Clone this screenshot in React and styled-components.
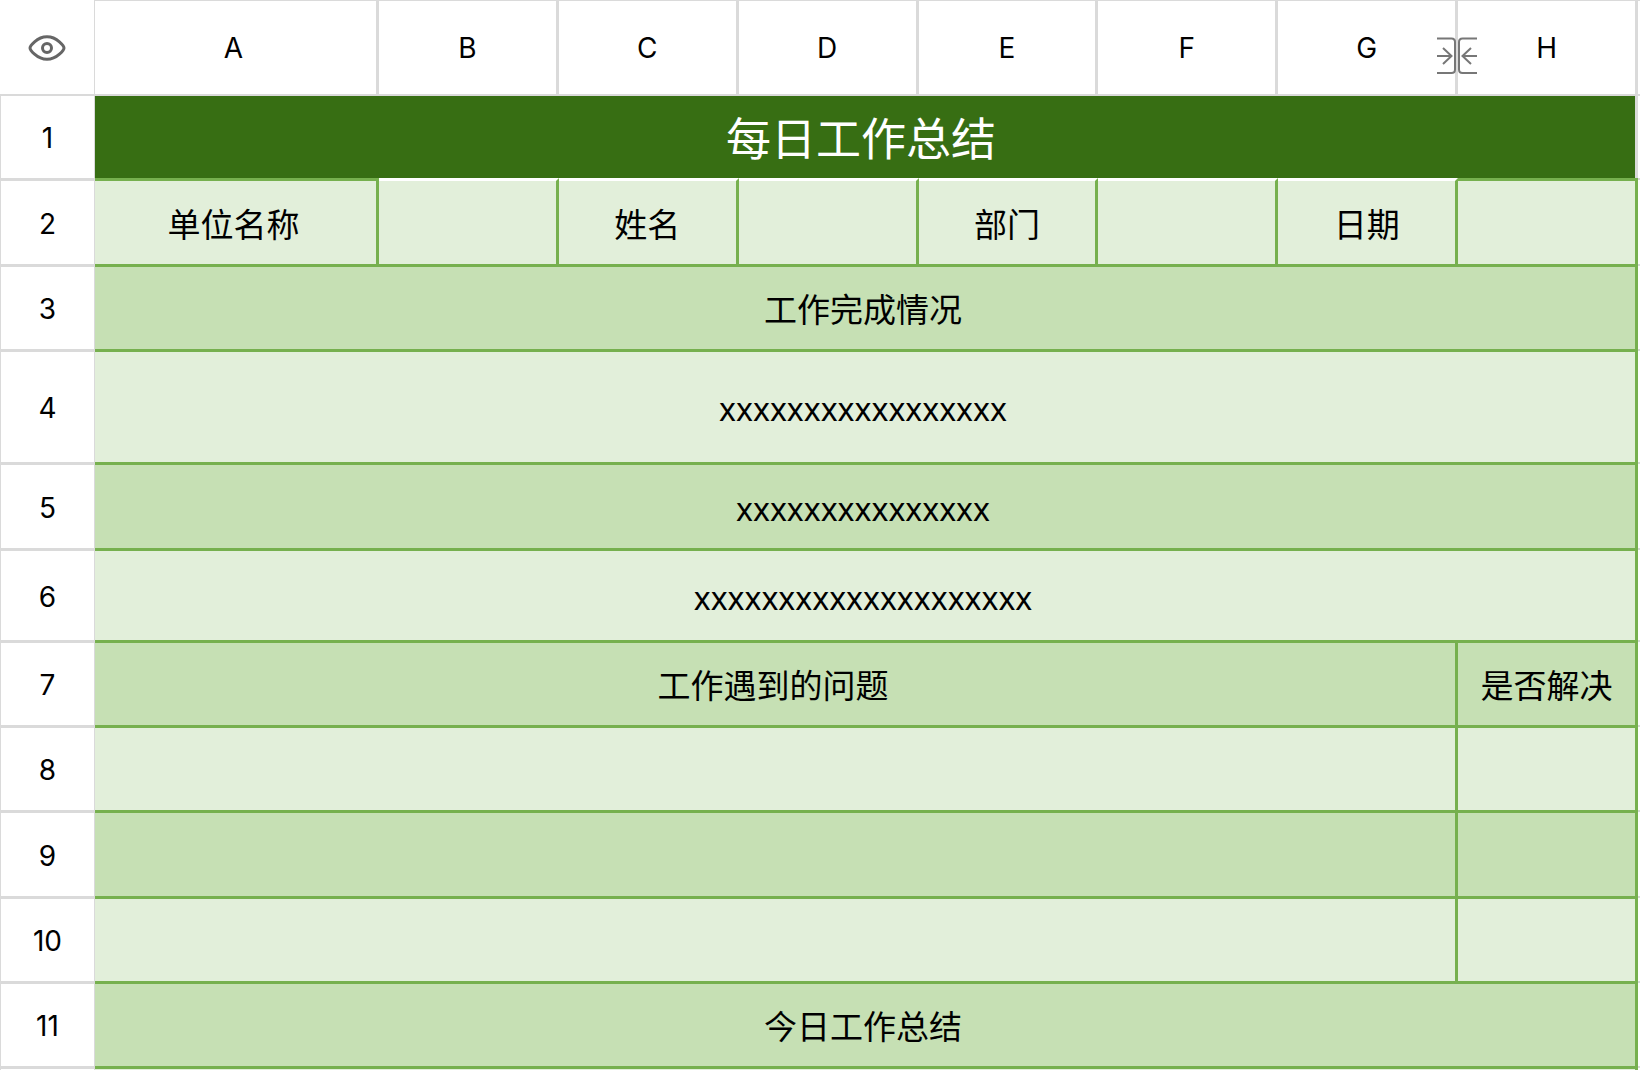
import React from 'react';
import styled, { createGlobalStyle } from 'styled-components';

const LINE = '#dadada';
const GREEN = '#76b04e';
const LIGHT = '#e2efda';
const MID = '#c6e0b4';
const DARK = '#376e13';

const GlobalStyle = createGlobalStyle`
  body {
    margin: 0;
    background: #fff;
    color: #000;
  }
`;

const Sheet = styled.table`
  width: 100%;
  table-layout: fixed;
  border-collapse: separate;
  border-spacing: 0;
  font-family: 'Noto Sans', 'Noto Sans CJK SC', sans-serif;
`;

const Col = styled.col`
  width: ${({ $width }) => ($width ? `${$width}px` : 'auto')};
`;

const Row = styled.tr`
  height: ${({ $height }) => $height}px;
`;

const Corner = styled.td`
  box-sizing: border-box;
  padding: 2px 0 0;
  border-right: 1px solid ${LINE};
`;

const EyeButton = styled.button`
  display: flex;
  margin: 0 auto;
  padding: 0;
  border: 0;
  background: none;
  cursor: pointer;
`;

const ColumnHead = styled.th`
  position: relative; // anchors the resize handle
  box-sizing: border-box;
  padding: 0 ${({ $wide }) => ($wide ? 4 : 0)}px 0 0;
  border-top: 1px solid ${LINE};
  border-right: 3px solid ${LINE};
  font-family: Inter, sans-serif;
  font-size: 28px;
  font-weight: 400;
  line-height: 32px;
`;

const RowHead = styled.th`
  box-sizing: border-box;
  padding: 2px 0 0;
  border-top: ${({ $first }) => ($first ? 2 : 3)}px solid ${LINE};
  border-left: 1px solid ${LINE};
  border-right: 1px solid ${LINE};
  font-family: Inter, sans-serif;
  font-size: 28px;
  font-weight: 400;
  line-height: 32px;
`;

const Cell = styled.td`
  box-sizing: border-box;
  // columns wider than the standard one sit slightly left of centre
  padding: 4px ${({ $wide }) => ($wide ? 4 : 0)}px 0 0;
  border-top: 3px solid ${({ $top }) => $top || GREEN};
  border-right: 3px solid ${GREEN};
  background: ${({ $fill }) => $fill};
  font-size: ${({ $note }) => ($note ? 32 : 33)}px;
  line-height: 40px;
  text-align: center;
  white-space: nowrap;
`;

const TitleCell = styled(Cell)`
  padding: 4px 8px 0 0;
  border-top: 2px solid ${LINE};
  border-right-color: ${LINE};
  color: #fff;
  font-size: 45px;
  line-height: 56px;
`;

const EdgeRow = styled(Row)`
  & > * {
    padding: 0;
  }
`;

const Gutter = styled.td`
  padding: 0;
  border-top: ${({ $head }) => ($head ? 1 : 2)}px solid ${LINE};
`;

const ResizeHandle = styled.button`
  position: absolute; // sits over the line between two columns
  top: 35px;
  right: -22px;
  z-index: 1;
  display: flex;
  padding: 0;
  border: 0;
  background: none;
  cursor: col-resize;
`;

const EyeIcon = () => (
  <svg width="38" height="26" viewBox="0 0 38 26" fill="none" stroke="#666" strokeWidth="3">
    <path
      d="M2 13C2 11.500 8.500 1.700 19 1.700S36 11.500 36 13S29.500 24.300 19 24.300S2 14.500 2 13Z"
      strokeLinejoin="round"
    />
    <circle cx="19" cy="13" r="4.500" />
  </svg>
);

const ResizeIcon = () => (
  <svg width="40" height="38" viewBox="0 0 40 38" fill="none" stroke="#777" strokeWidth="2">
    <path d="M0 2.500H14.500Q18 2.500 18 6V33.500Q18 37 14.500 37H0" />
    <path d="M40 2.500H25.500Q22 2.500 22 6V33.500Q22 37 25.500 37H40" />
    <path d="M0 20H15M6 12L14.500 20L6 28" />
    <path d="M40 20H25M34 12L25.500 20L34 28" />
  </svg>
);

const columns = ['A', 'B', 'C', 'D', 'E', 'F', 'G', 'H'];

const rows = [
  { height: 84, title: '每日工作总结' },
  {
    height: 86,
    cells: [
      { text: '单位名称', wide: true },
      { top: '#fff' },
      { text: '姓名', top: '#fff' },
      { top: '#fff' },
      { text: '部门', top: '#fff' },
      { top: '#fff' },
      { text: '日期', top: '#fff' },
      {},
    ],
  },
  { height: 85, cells: [{ text: '工作完成情况', span: 8, fill: MID }] },
  { height: 113, cells: [{ text: 'xxxxxxxxxxxxxxxxx', span: 8, note: true }] },
  { height: 86, cells: [{ text: 'xxxxxxxxxxxxxxx', span: 8, fill: MID, note: true }] },
  { height: 92, cells: [{ text: 'xxxxxxxxxxxxxxxxxxxx', span: 8, note: true }] },
  { height: 85, cells: [{ text: '工作遇到的问题', span: 7, fill: MID }, { text: '是否解决', fill: MID }] },
  { height: 85, cells: [{ span: 7 }, {}] },
  { height: 86, cells: [{ span: 7, fill: MID }, { fill: MID }] },
  { height: 85, cells: [{ span: 7 }, {}] },
  { height: 85, cells: [{ text: '今日工作总结', span: 8, fill: MID }] },
];

const App = () => {
  return (
    <>
      <GlobalStyle />
      <Sheet>
        <colgroup>
          <Col $width={95} />
          <Col $width={284} />
          {columns.slice(1).map((name) => (
            <Col key={name} />
          ))}
          <Col $width={2} />
        </colgroup>
        <thead>
          <Row $height={94}>
            <Corner>
              <EyeButton type="button" aria-label="显示">
                <EyeIcon />
              </EyeButton>
            </Corner>
            {columns.map((name) => (
              <ColumnHead key={name} scope="col" $wide={name === 'A'}>
                {name}
                {name === 'G' && (
                  <ResizeHandle type="button" aria-label="调整列宽">
                    <ResizeIcon />
                  </ResizeHandle>
                )}
              </ColumnHead>
            ))}
            <Gutter $head />
          </Row>
        </thead>
        <tbody>
          {rows.map((row, i) => (
            <Row key={i} $height={row.height}>
              <RowHead scope="row" $first={i === 0}>
                {i + 1}
              </RowHead>
              {row.title && (
                <TitleCell colSpan={8} $fill={DARK}>
                  {row.title}
                </TitleCell>
              )}
              {row.cells?.map((cell, j) => (
                <Cell
                  key={j}
                  colSpan={cell.span || 1}
                  $fill={cell.fill || LIGHT}
                  $top={cell.top}
                  $note={cell.note}
                  $wide={cell.wide || cell.span > 1}
                >
                  {cell.text}
                </Cell>
              ))}
              <Gutter />
            </Row>
          ))}
          {/* Top edge of the next row */}
          <EdgeRow $height={4}>
            <RowHead as="td" />
            <Cell colSpan={8} $fill={LIGHT} />
            <Gutter />
          </EdgeRow>
        </tbody>
      </Sheet>
    </>
  );
};

export default App;
